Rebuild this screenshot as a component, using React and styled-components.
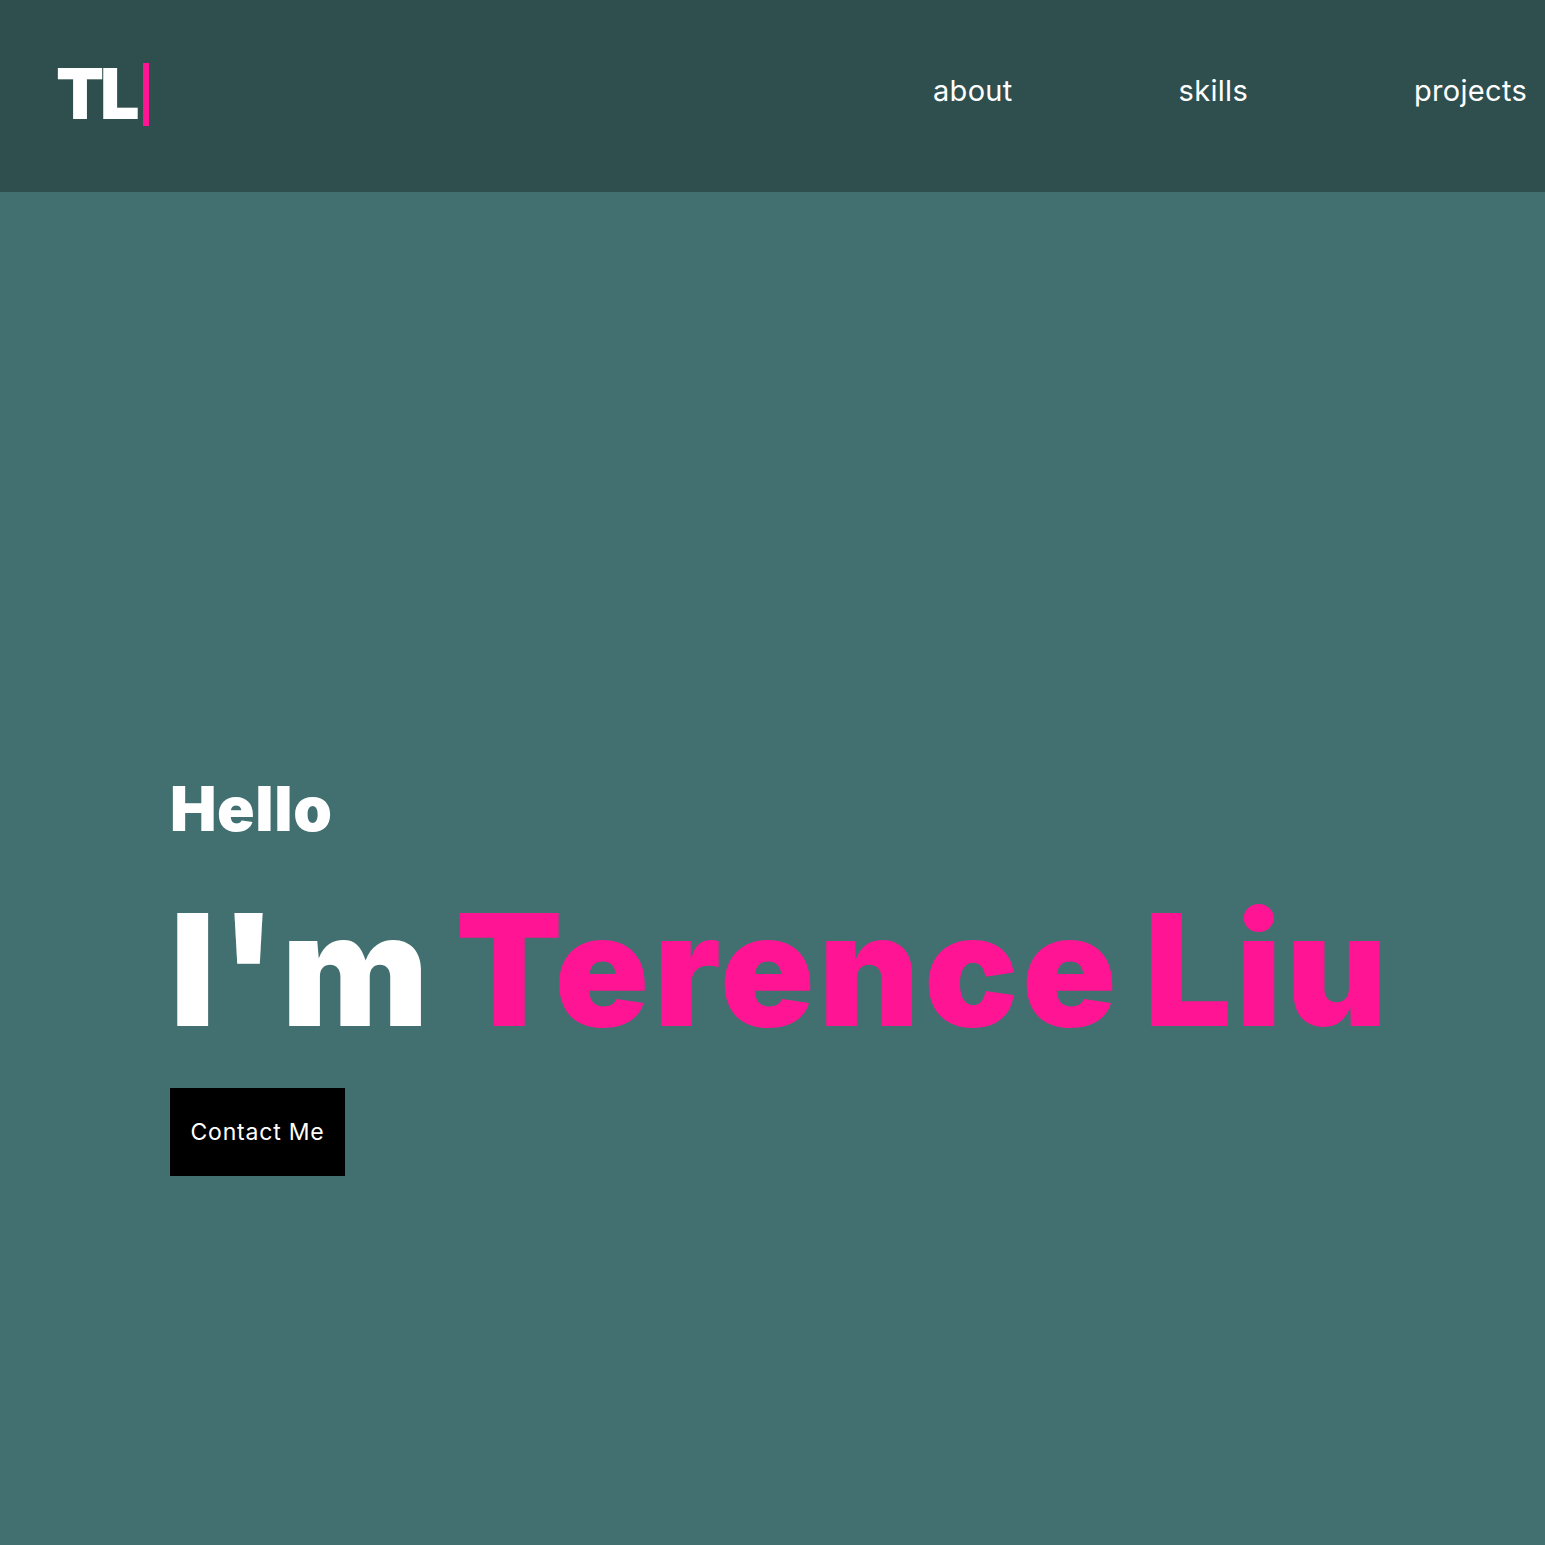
import React from 'react';
import styled, { createGlobalStyle } from 'styled-components';

const GlobalStyle = createGlobalStyle`
  html, body {
    margin: 0;
    padding: 0;
    background: #426f6f;
    font-family: Inter, "Noto Sans", sans-serif;
  }
`;

const Header = styled.header`
  height: 192px;
  background: #2f4f4f;
  display: flex;
  align-items: center;
  justify-content: space-between;
  padding: 0 18px 0 56px;
  box-sizing: border-box;
`;

const Logo = styled.div`
  display: flex;
  align-items: center;
  gap: 7px;
  margin-top: -4px;
  color: #fff;
  font-size: 70px;
  font-weight: 900;
  letter-spacing: -4px;
  line-height: 1;
`;

const Caret = styled.span`
  width: 6px;
  height: 63px;
  background: #ff1493;
`;

const Nav = styled.nav`
  display: flex;
  gap: 166px;
  margin-top: -12px;
`;

const NavLink = styled.a`
  color: #fff;
  font-size: 29px;
  font-weight: 400;
  letter-spacing: 0.3px;
  text-decoration: none;
`;

const Hero = styled.main`
  min-height: 1353px;
  padding: 586px 0 0 170px;
  box-sizing: border-box;
`;

const Hello = styled.h2`
  margin: 0;
  color: #fff;
  font-size: 62px;
  font-weight: 900;
  line-height: 1;
  letter-spacing: 0.6px;
`;

const Title = styled.h1`
  margin: 52px 0 0;
  color: #fff;
  font-size: 156px;
  font-weight: 900;
  line-height: 1;
  letter-spacing: 4px;
  word-spacing: -12px;
`;

const Name = styled.span`
  color: #ff1493;
`;

const ContactButton = styled.button`
  margin-top: 40px;
  width: 175px;
  height: 88px;
  background: #000;
  color: #fff;
  border: none;
  font-family: Inter, sans-serif;
  font-size: 23px;
  letter-spacing: 0.8px;
  padding: 0;
`;

const App = () => (
  <>
    <GlobalStyle />
    <Header>
      <Logo>TL<Caret /></Logo>
      <Nav>
        <NavLink>about</NavLink>
        <NavLink>skills</NavLink>
        <NavLink>projects</NavLink>
      </Nav>
    </Header>
    <Hero>
      <Hello>Hello</Hello>
      <Title>I'm <Name>Terence Liu</Name></Title>
      <ContactButton>Contact Me</ContactButton>
    </Hero>
  </>
);

export default App;
